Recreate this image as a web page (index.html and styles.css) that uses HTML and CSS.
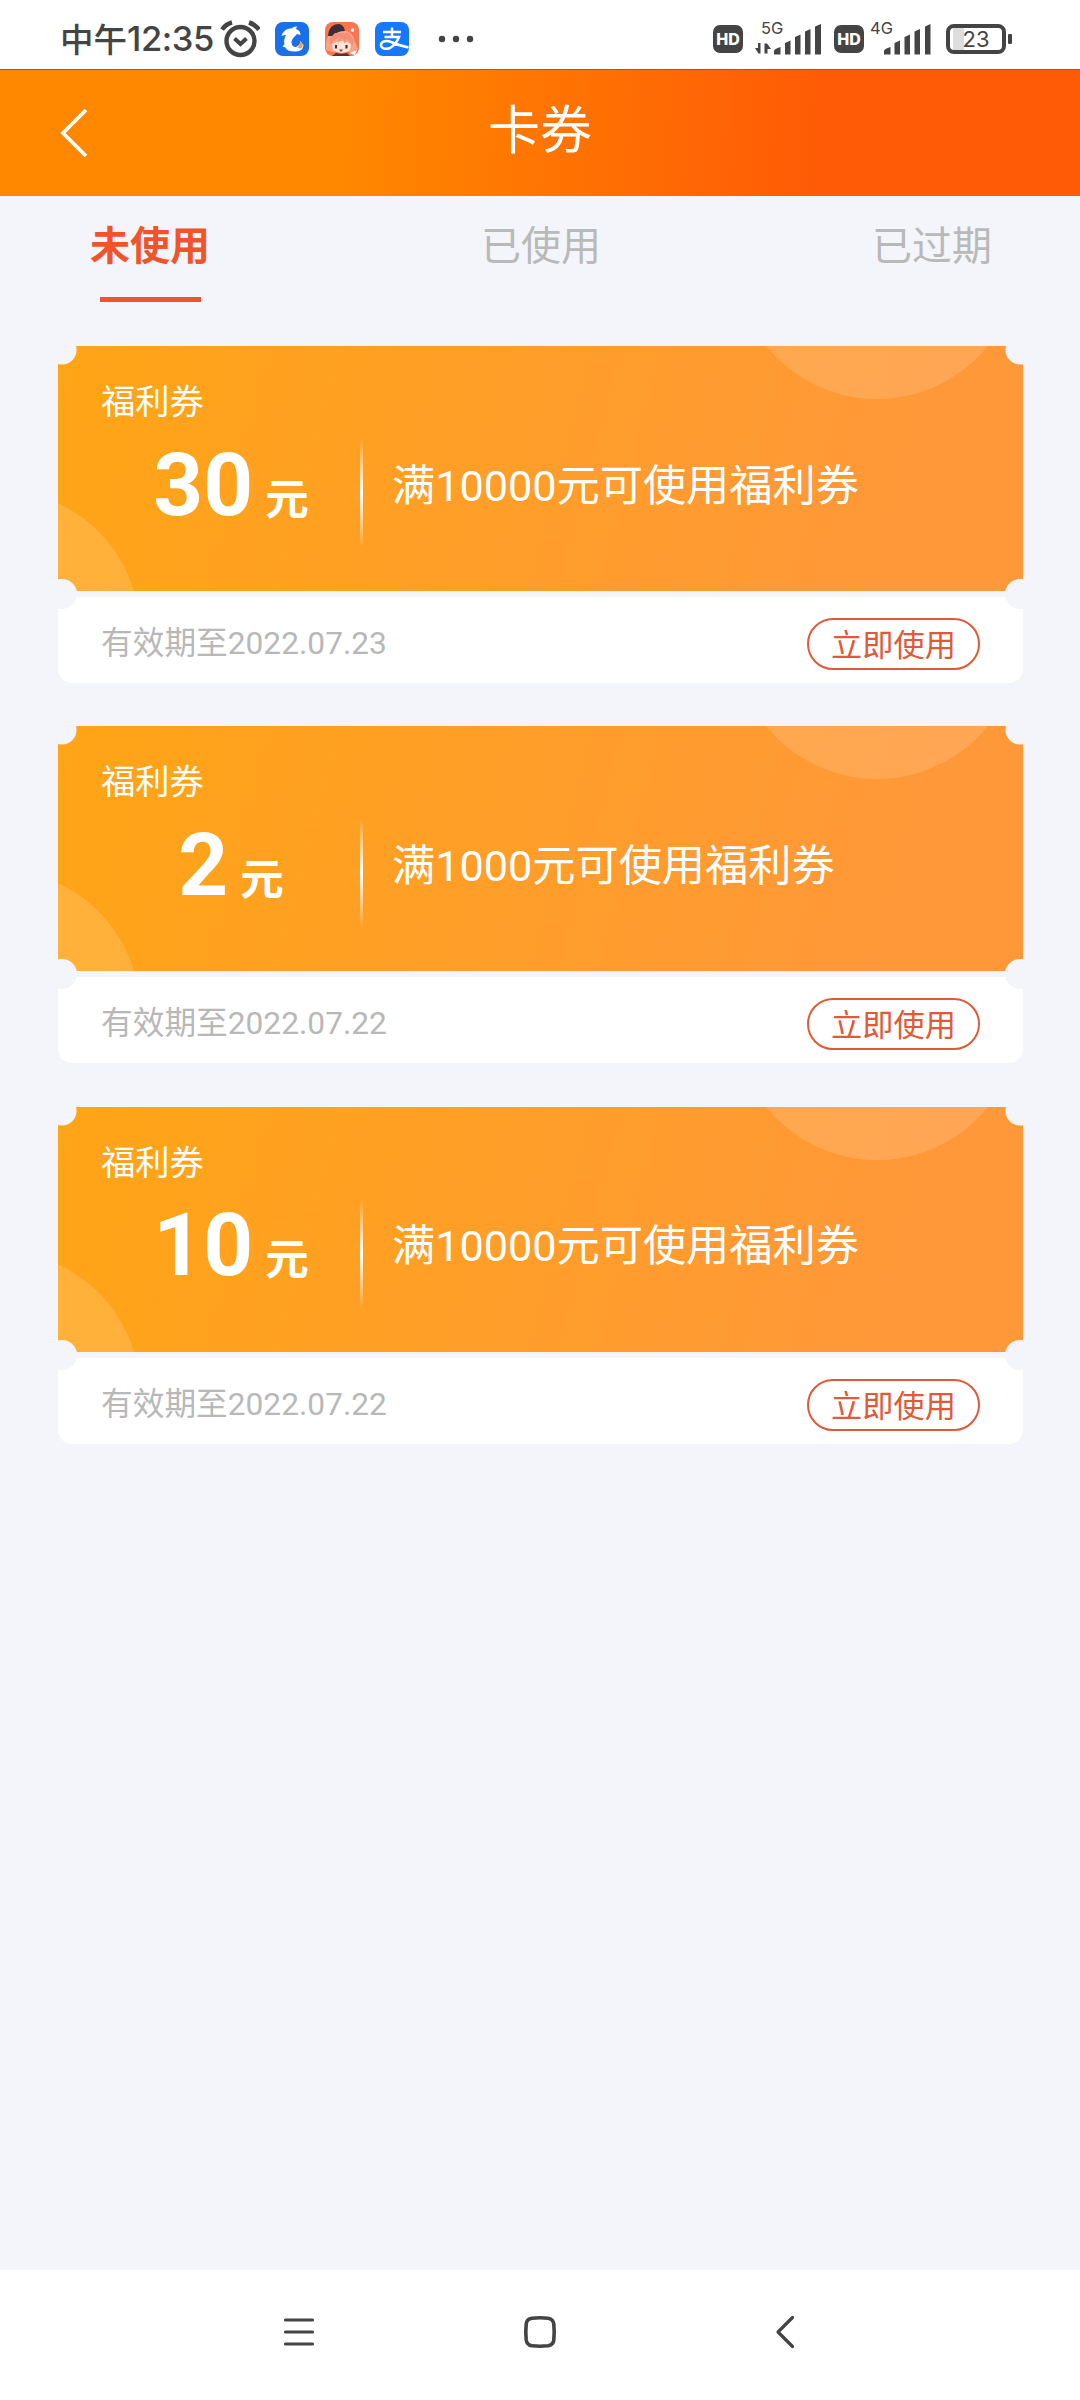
FILE: index.html
```html
<!DOCTYPE html>
<html lang="zh-CN">
<head>
<meta charset="utf-8">
<title>卡券</title>
<link rel="stylesheet" href="styles.css">
</head>
<body>
<div class="status">
  <div class="clock"><span class="clock-cn">中午</span><span class="clock-time">12:35</span></div>
  <svg class="alarm" width="40" height="38" viewBox="0 0 40 38" fill="none" stroke="#444" stroke-width="4.4">
    <circle cx="20.500" cy="21" r="14"/>
    <path d="M14.500 18.500l6 5.500 6-5.500" stroke-width="4"/>
    <path d="M2 9.500Q6 4 12 2.500M29 2.500q6 2 10 7" stroke-width="4.6"/>
  </svg>
  <svg class="app" width="34" height="34" viewBox="0 0 34 34">
    <rect width="34" height="34" rx="8" fill="#1a70e8"/>
    <path d="M6.500 14C8 9 11.500 6.500 16.500 6.500Q19 4 22 4.500l-1 2.500q4.500 1.500 4.500 6l-3.500-1q-3 3-4.500 5-2 3-.5 6 2 3 5 1.500 3.500-1.500 3-5.500l3.500 4q-.5 6-7.500 6.500-9 .5-10.500-4l-3-1 2-2.500q-1-3.500.5-7l1-2q-2.500 0-4.500 1z" fill="#fff"/>
    <path d="M22.500 25.500q3.500-2 2.500-6.500 4 2.500 2 6.500-1.500 2-4.500 0z" fill="#f09a4a"/>
  </svg>
  <svg class="app" width="34" height="34" viewBox="0 0 34 34">
    <rect width="34" height="34" rx="8" fill="#f9744f"/>
    <path d="M1 22Q2 9 15 8q13 0 15 12l3 7-6 3H7l-6-2z" fill="#fba28b"/>
    <path d="M3 14Q4 2 14 2q5 1 6 7-8 0-12 5z" fill="#3d2d38"/>
    <path d="M7 22q10-6 19 0l-1 6q-8 6-17 0z" fill="#ffe3d5"/>
    <path d="M6 24q1-7 8-8l-1 6 4-6 3 6 1-5q5 2 6 8l2-7-6-7H10l-6 6z" fill="#f58f78"/>
    <path d="M11 23v3.500M21.500 23v3.500" stroke="#4c2e31" stroke-width="2.200"/>
    <path d="M14 27.500h4l-2 2.500z" fill="#a8323a"/>
    <path d="M7 34l4-3 5 1 6-1 3 3z" fill="#5a3037"/>
    <circle cx="27.500" cy="8" r="1.800" fill="#fff"/>
    <path d="M24 31l8-3-2 5z" fill="#fff"/>
  </svg>
  <svg class="app" width="34" height="34" viewBox="0 0 34 34">
    <rect width="34" height="34" rx="8" fill="#1677ff"/>
    <path d="M8 10h18M17 5.500v9.500M9.500 15h14.500q-3 7.500-9 11c-5 2-9.500 0-9-3.500.8-4 6-4 10-2.500q7 3 17.500 5.500" fill="none" stroke="#fff" stroke-width="2.500"/>
  </svg>
  <svg class="dots" width="36" height="8" viewBox="0 0 36 8" fill="#444"><circle cx="4" cy="4" r="3.200"/><circle cx="18" cy="4" r="3.200"/><circle cx="32" cy="4" r="3.200"/></svg>
  <div class="hd">HD</div>
  <div class="signal signal-5g">
    <span class="net">5G</span>
    <svg width="67" height="31" viewBox="0 0 67 31" fill="#444">
      <path d="M5.500 19v10.500H3.500L0 24h3v-5zM9.500 29.500V19.500h2.500l4 5.500h-3.500v4.500z"/>
      <path d="M19 27q0-2 6.500-4v7.500H19zM30 19l5.500-2.500v14H30zM40 13l5.500-2.500v20H40zM50 7.500L55.500 5v25.500H50zM60 2.500L66 0v30.500h-6z"/>
    </svg>
  </div>
  <div class="hd">HD</div>
  <div class="signal signal-4g">
    <span class="net">4G</span>
    <svg width="48" height="31" viewBox="0 0 48 31" fill="#444">
      <path d="M0 27q0-2 6.500-4v7.500H0zM10.500 19l5.500-2.500v14h-5.500zM20.500 13l5.500-2.500v20h-5.500zM30.500 7.500L36 5v25.500h-5.500zM41 2.500L46.500 0v30.500H41z"/>
    </svg>
  </div>
  <div class="battery"><span class="level">23</span></div>
</div>

<header class="header">
  <svg class="back" width="30" height="50" viewBox="0 0 30 50" fill="none" stroke="#fff" stroke-width="3.800"><path d="M26 2L3 25l23 23"/></svg>
  <h1>卡券</h1>
</header>

<nav class="tabs">
  <a class="tab active">未使用</a>
  <a class="tab">已使用</a>
  <a class="tab">已过期</a>
</nav>

<main class="list">
  <section class="coupon">
    <div class="face">
      <div class="kind">福利券</div>
      <div class="row"><div class="amount"><b>30</b><span>元</span></div><i class="rule"></i><div class="terms">满10000元可使用福利券</div></div>
    </div>
    <div class="foot"><span class="expiry">有效期至2022.07.23</span><a class="use">立即使用</a></div>
  </section>
  <section class="coupon">
    <div class="face">
      <div class="kind">福利券</div>
      <div class="row"><div class="amount"><b>2</b><span>元</span></div><i class="rule"></i><div class="terms">满1000元可使用福利券</div></div>
    </div>
    <div class="foot"><span class="expiry">有效期至2022.07.22</span><a class="use">立即使用</a></div>
  </section>
  <section class="coupon">
    <div class="face">
      <div class="kind">福利券</div>
      <div class="row"><div class="amount"><b>10</b><span>元</span></div><i class="rule"></i><div class="terms">满10000元可使用福利券</div></div>
    </div>
    <div class="foot"><span class="expiry">有效期至2022.07.22</span><a class="use">立即使用</a></div>
  </section>
</main>

<footer class="sysnav">
  <svg width="32" height="32" viewBox="0 0 32 32" fill="none" stroke="#444" stroke-width="3.200" stroke-linecap="round"><path d="M2.500 4h27M2.500 16h27M2.500 28h27"/></svg>
  <svg width="34" height="34" viewBox="0 0 34 34" fill="none" stroke="#444" stroke-width="3.600"><path d="M17 2.800c12.500 0 14.200 1.700 14.200 14.200S29.500 31.200 17 31.200 2.800 29.500 2.800 17 4.500 2.800 17 2.800z" visibility="hidden"/><path d="M9 3.200q8-.8 16 0 5 .5 5.800 5.800.8 8 0 16-.5 5-5.800 5.800-8 .8-16 0-5-.5-5.800-5.800-.8-8 0-16Q3.700 4 9 3.200z"/></svg>
  <svg width="20" height="34" viewBox="0 0 20 34" fill="none" stroke="#444" stroke-width="3.200" stroke-linecap="round" stroke-linejoin="round"><path d="M17.500 2.500L3 17l14.500 14.500"/></svg>
</footer>
</body>
</html>
```
FILE: styles.css
```css
* { box-sizing: border-box; }
body {
  margin: 0;
  width: 1080px;
  height: 2400px;
  display: flex;
  flex-direction: column;
  background: #f3f5fa;
  font-family: Roboto, "Noto Sans CJK SC", sans-serif;
}

/* status bar */
.status {
  height: 69px;
  display: flex;
  align-items: flex-start;
  padding-left: 60px;
  background: #fff;
  color: #444;
}
.clock { display: flex; height: 50px; margin-top: 14px; width: 160px; line-height: 50px; white-space: nowrap; }
.clock-cn { font: 500 33.500px/50px "Noto Sans CJK SC", sans-serif; margin-top: -1px; }
.clock-time { font: 500 34.500px/50px Inter, sans-serif; letter-spacing: -0.4px; }
.alarm { margin: 20px 15px 0 0; }
.app { margin: 22px 16px 0 0; }
.dots { margin: 35px 239px 0 13px; }
.hd {
  width: 30px; height: 28px; margin-top: 25px;
  border-radius: 7px;
  background: #444; color: #fff;
  font: 800 16px/28px Inter, sans-serif;
  text-align: center;
}
.signal { position: relative; margin-top: 24px; }
.signal svg { display: block; }
.signal-5g { margin-left: 12px; margin-right: 12px; }
.signal-4g { margin-left: 20px; margin-right: 14px; }
.net { position: absolute; top: -3px; left: 6px; font: 400 16.500px/15px Inter, sans-serif; }
.signal-4g .net { left: -14px; }
.battery {
  position: relative;
  width: 60px; height: 30px; margin-top: 24px;
  border: 4px solid #444; border-radius: 8px;
  background: linear-gradient(90deg, #fff 3px, #ddd 3px 14px, #fff 14px);
}
.battery::after {
  content: ""; position: absolute; left: 58px; top: 6px;
  width: 4px; height: 10px; border-radius: 1px; background: #444;
}
.level { display: block; text-align: center; font: 400 22px/23px Inter, sans-serif; }

/* title bar */
.header {
  height: 127px;
  display: grid;
  grid-template-columns: 200px 1fr 200px;
  align-items: center;
  border-top: 1px solid #b5512d;
  background: linear-gradient(93deg, #ff8800 32%, #ff5a06 76%);
}
.back { margin-left: 60px; }
.header h1 { margin: 0; padding-bottom: 3px; font-size: 52px; font-weight: 400; color: #fff; text-align: center; line-height: 76px; }

/* tabs */
.tabs { display: flex; justify-content: space-between; height: 150px; padding: 0 88px 0 90px; }
.tab { height: 106px; padding-top: 21px; font-size: 40px; line-height: 60px; color: #b9b9b9; }
.tab.active { color: #f0542d; font-weight: 700; }
.tab.active::after { content: ""; display: block; width: 101px; height: 5px; margin: 20px auto 0; background: #f0542d; }

/* coupons */
.list { flex: 1; display: flex; flex-direction: column; gap: 43.300px; padding: 0 57px 0 58px; }
.coupon {
  height: 337px;
  display: flex; flex-direction: column; gap: 6px;
}
.face {
  height: 245px;
  padding: 31px 0 0 43px;
  color: #fff;
  background:
    radial-gradient(circle at 4px 4px, #f3f5fa 14px, transparent 15px),
    radial-gradient(circle at calc(100% - 3px) 4px, #f3f5fa 14px, transparent 15px),
    radial-gradient(circle at 4px calc(100% + 3px), #f3f5fa 14.500px, transparent 15.500px),
    radial-gradient(circle at calc(100% - 3px) calc(100% + 3px), #f3f5fa 14.500px, transparent 15.500px),
    radial-gradient(circle at 819px -89px, rgba(255,255,255,.14) 141.500px, transparent 142.500px),
    radial-gradient(circle at -60px 286px, rgba(255,255,255,.14) 141.500px, transparent 142.500px),
    linear-gradient(105deg, #ffa516, #ff9838 85%);
}
.kind { font-size: 34.300px; line-height: 50px; }
.row { display: flex; align-items: center; height: 120px; margin-top: 6px; }
.amount { width: 260px; display: flex; justify-content: center; align-items: baseline; gap: 12px; margin-top: -17px; }
.amount b { font-size: 87px; line-height: 104px; }
.amount span { font-size: 43.500px; font-weight: 700; }
.rule { width: 3px; height: 110px; margin-left: -1px; background: linear-gradient(transparent, #fff 50%, transparent); }
.terms { margin-left: 29px; margin-top: -13px; font-size: 43.200px; line-height: 60px; white-space: nowrap; }
.foot {
  height: 86px;
  display: flex; align-items: center; justify-content: space-between;
  padding: 8px 43px 0 43px;
  background:
    radial-gradient(circle at 4px -3px, #f3f5fa 14.500px, transparent 15.500px),
    radial-gradient(circle at calc(100% - 3px) -3px, #f3f5fa 14.500px, transparent 15.500px),
    #fff;
  border-radius: 0 0 14px 14px;
}
.expiry { font-size: 31.700px; line-height: 46px; color: #b8b8b8; }
.use {
  width: 173px; height: 52px;
  border: 2px solid #e05a38; border-radius: 26px;
  color: #e05a38; font-size: 31.200px; line-height: 52px; text-align: center;
}

/* system navigation */
.sysnav {
  height: 130px;
  display: grid;
  grid-template-columns: 32px 34px 20px;
  column-gap: 208px;
  align-items: center;
  padding: 0 0 6px 283px;
  background: #fff;
}
.sysnav svg:last-child { margin-left: 10px; }
```
